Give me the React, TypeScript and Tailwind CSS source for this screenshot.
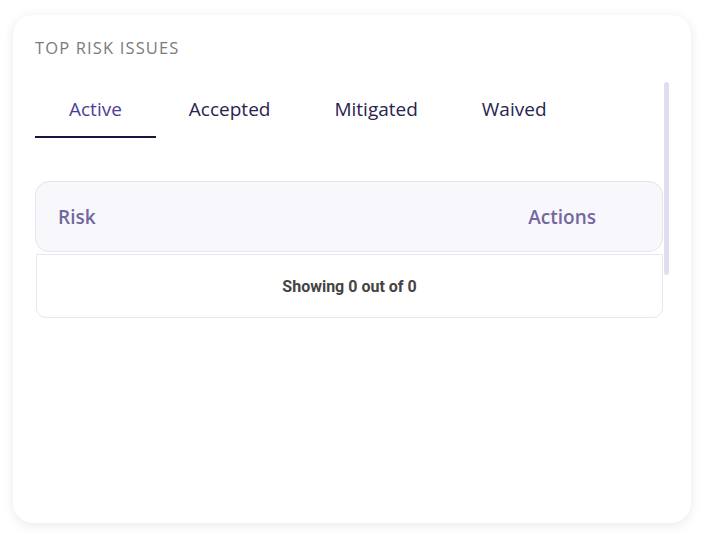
import { useState } from 'react'

const TABS = ['Active', 'Accepted', 'Mitigated', 'Waived']

export default function App() {
  const [active, setActive] = useState('Active')

  return (
    <div className="h-[547px] w-[706px] bg-white pl-[13px] pt-[15px]" style={{ fontFamily: '"Open Sans", "Noto Sans", sans-serif' }}>
      <div className="flex h-[508px] w-[678px] flex-col rounded-[20px] bg-white px-[22px] pt-[22px] shadow-[0_2px_12px_rgba(0,0,0,0.09)]">
        <h2 className="text-[16.5px] leading-[22px] tracking-[1.15px] text-[#7b7b7b] uppercase">Top risk issues</h2>

        <div className="mt-[23px] flex">
          <div className="w-[628px]">
            <div className="flex">
              {TABS.map((tab) => (
                <button
                  key={tab}
                  type="button"
                  onClick={() => setActive(tab)}
                  className={
                    tab === active
                      ? 'border-b-2 border-[#1c1440] px-[34px] pt-[14px] pb-[13px] text-[19px] leading-[27px] text-[#4d3d9b]'
                      : 'border-b-2 border-transparent pr-[31px] pl-[33px] pt-[14px] pb-[13px] text-[19px] leading-[27px] text-[#29244f]'
                  }
                >
                  {tab}
                </button>
              ))}
            </div>

            <div className="mt-[43px]">
              <div className="flex h-[71px] items-center justify-between rounded-[14px] border border-[#e6e4ee] bg-[#f8f7fc] pt-[2px] pr-[66px] pl-[22px] text-[19px] font-semibold text-[#7267a0]">
                <span>Risk</span>
                <span>Actions</span>
              </div>
              <div className="mt-[2px] ml-px flex h-[64px] items-center justify-center rounded-b-[10px] border border-[#e8e6ef] bg-white pt-px">
                <span className="text-[16px] font-bold text-[#444444]" style={{ fontFamily: 'Roboto, "Liberation Sans", sans-serif' }}>
                  Showing 0 {'out of'} 0
                </span>
              </div>
            </div>
          </div>
          <div className="ml-px w-[5px]">
            <div className="h-[193px] rounded-full bg-[#e1def0]" />
          </div>
        </div>
      </div>
    </div>
  )
}
